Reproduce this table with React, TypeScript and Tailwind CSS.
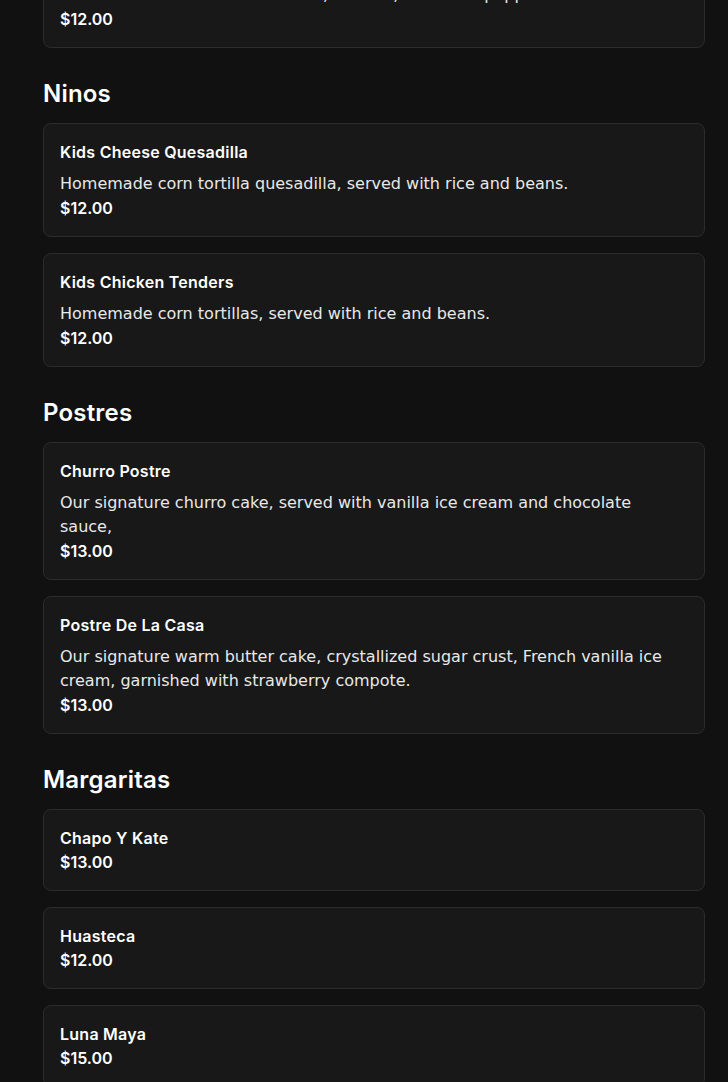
import React from 'react';

type Item = { name: string; description?: string; price: string };
type Section = { title?: string; items: Item[] };

const sections: Section[] = [
  {
    items: [
      {
        name: 'Tacos De Pollo',
        description: 'Grilled chicken tacos with onions, cilantro, salsa and peppers.',
        price: '$12.00',
      },
    ],
  },
  {
    title: 'Ninos',
    items: [
      { name: 'Kids Cheese Quesadilla', description: 'Homemade corn tortilla quesadilla, served with rice and beans.', price: '$12.00' },
      { name: 'Kids Chicken Tenders', description: 'Homemade corn tortillas, served with rice and beans.', price: '$12.00' },
    ],
  },
  {
    title: 'Postres',
    items: [
      { name: 'Churro Postre', description: 'Our signature churro cake, served with vanilla ice cream and chocolate sauce,', price: '$13.00' },
      {
        name: 'Postre De La Casa',
        description: 'Our signature warm butter cake, crystallized sugar crust, French vanilla ice cream, garnished with strawberry compote.',
        price: '$13.00',
      },
    ],
  },
  {
    title: 'Margaritas',
    items: [
      { name: 'Chapo Y Kate', price: '$13.00' },
      { name: 'Huasteca', price: '$12.00' },
      { name: 'Luna Maya', price: '$15.00' },
    ],
  },
];

const heading = { fontFamily: 'Inter, "Liberation Sans", sans-serif' };

const MenuCard: React.FC<{ item: Item }> = ({ item }) => (
  <div className="rounded-lg border border-[#2c2c2c] bg-[#181818] p-4">
    <h3 className="text-[16px] font-semibold leading-6 tracking-[0.25px] text-white" style={heading}>
      {item.name}
    </h3>
    {item.description && (
      <p className="mt-2 text-[16px] leading-6 text-[#e8e8e8]">{item.description}</p>
    )}
    <p className="text-[16px] font-semibold leading-6 text-white" style={heading}>
      {item.price}
    </p>
  </div>
);

export default function App() {
  return (
    <div
      className="h-[1082px] overflow-hidden bg-[#111111]"
      style={{ fontFamily: '"DejaVu Sans", sans-serif' }}
    >
      <div className="-mt-[66px] ml-[43px] w-[662px]">
        {sections.map((section, i) => (
          <section key={i} className={i === 0 ? '' : 'mt-[30px]'}>
            {section.title && (
              <h2 className="mb-[13px] text-[24px] font-semibold leading-8 tracking-[0.2px] text-white" style={heading}>
                {section.title}
              </h2>
            )}
            <div className="flex flex-col gap-4">
              {section.items.map((item) => (
                <MenuCard key={item.name} item={item} />
              ))}
            </div>
          </section>
        ))}
      </div>
    </div>
  );
}
